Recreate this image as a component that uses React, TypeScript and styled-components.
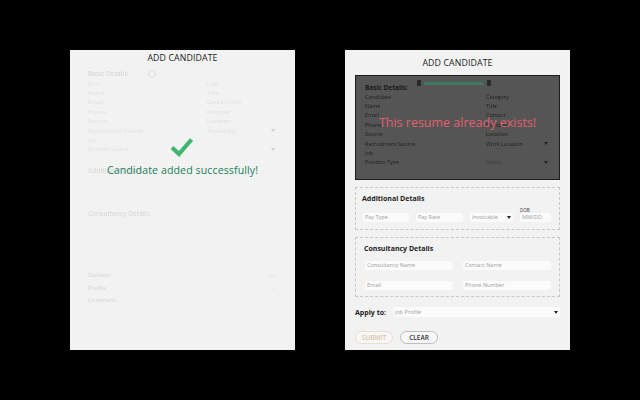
import React from "react";
import styled, { createGlobalStyle } from "styled-components";

const Global = createGlobalStyle`
  html, body { margin: 0; padding: 0; background: #000; }
  body { width: 640px; height: 400px; overflow: hidden; font-family: "Open Sans", "Liberation Sans", sans-serif; }
`;
const Stage = styled.div`
  width: 640px; height: 400px; background: #000; box-sizing: border-box;
  padding: 50px 70px; display: flex; gap: 50px;
`;
const Panel = styled.section`
  position: relative; width: 225px; height: 300px; box-sizing: border-box; background: #f2f2f2; overflow: hidden;
  display: flex; flex-direction: column;
`;
const Title = styled.h1<{ $top: number }>`
  margin: 0; padding-top: ${(p) => p.$top}px; height: 14px; line-height: 14px; box-sizing: content-box;
  font-size: 8.8px; font-weight: 400; text-align: center; color: #1c1c1c; letter-spacing: 0.1px;
`;

/* Left, faded form */
const Faded = styled.div`
  display: flex; flex-direction: column; padding: 3px 20px 0 18px; color: #d4d4d4; filter: blur(0.5px);
  font-size: 6px; line-height: 8px;
`;
const FadedHead = styled.div`
  display: flex; align-items: center; gap: 20px; height: 12px; font-weight: 600; color: #d8d8d8; font-size: 6.5px;
`;
const FadedRing = styled.span`
  width: 6px; height: 6px; border-radius: 50%; border: 1px solid #e0e0e0;
`;
const FadedGrid = styled.div`
  display: grid; grid-template-columns: 119px 1fr; grid-auto-rows: 9.4px; margin-top: -1px;
`;
const FadedCell = styled.div`
  display: flex; justify-content: space-between; align-items: center; color: #e0e0e0; white-space: nowrap;
`;
const FadedSection = styled.div<{ $gap: number }>`
  margin-top: ${(p) => p.$gap}px; height: 12px; font-weight: 600; font-size: 6.5px; color: #dadada;
`;
const FadedLine = styled.div<{ $gap: number }>`
  margin-top: ${(p) => p.$gap}px; display: flex; justify-content: space-between; height: 12.5px; color: #d2d2d2;
`;
const FadedCaret = styled.span`
  margin-left: auto; width: 0; height: 0; border-left: 2px solid transparent; border-right: 2px solid transparent; border-top: 3px solid #cfcfcf;
`;
const Success = styled.div`
  position: absolute; left: 0; right: 0; top: 87px; display: flex; flex-direction: column; align-items: center; gap: 5px;
`;
const SuccessText = styled.div`
  font-size: 10.6px; line-height: 16px; color: #1c7f5c; white-space: nowrap; letter-spacing: 0.1px;
`;
const CheckSlot = styled.div`
  height: 20px; padding-right: 2px;
`;

/* Right form */
const Resume = styled.div`
  margin: 5px 10px 0; height: 105px; box-sizing: border-box; background: #555; border: 1px solid #1e1e1e;
  position: relative; padding: 3px 9px 0 9px; color: #222; font-size: 6px; line-height: 8px; flex: none;
`;
const Progress = styled.div`
  display: flex; align-items: center; gap: 3px; justify-content: center; height: 8px; margin-bottom: -3px; padding-right: 8px;
`;
const ProgressCap = styled.span`
  width: 4px; height: 6px; background: #2b2b2b;
`;
const ProgressBar = styled.span`
  width: 60px; height: 3px; background: #3f7a62; border-radius: 2px;
`;
const BasicHead = styled.div`
  font-size: 6.5px; font-weight: 700; color: #1b1b1b; height: 10px;
`;
const ResumeGrid = styled.div`
  display: grid; grid-template-columns: 121px 1fr; grid-auto-rows: 9.4px; margin-top: -2px; filter: blur(0.3px);
`;
const ResumeCell = styled.div<{ $soft?: boolean }>`
  display: flex; justify-content: space-between; align-items: center; padding-right: 2px;
  color: ${(p) => (p.$soft ? "#3c3c3c" : "#202020")}; white-space: nowrap; font-size: 5.5px;
`;
const Exists = styled.div`
  position: absolute; left: 0; right: 0; top: 38px; text-align: center; font-size: 12.5px; line-height: 18px;
  color: #e2606f; white-space: nowrap;
`;
const Box = styled.fieldset<{ $h: number; $gap: number }>`
  margin: ${(p) => p.$gap}px 10px 0; padding: 0; height: ${(p) => p.$h}px; box-sizing: border-box; flex: none;
  border: 1px dashed #c8c8c8; display: flex; flex-direction: column; min-width: 0;
`;
const BoxTitle = styled.div<{ $left: number }>`
  padding: 6px 0 0 ${(p) => p.$left}px; font-size: 7px; line-height: 10px; font-weight: 700; color: #222;
`;
const PayRow = styled.div`
  display: flex; align-items: flex-end; gap: 7px; padding: 0 7px; margin-top: 3px; height: 15px;
`;
const Input = styled.div<{ $w?: number }>`
  ${(p) => (p.$w ? `width: ${p.$w}px; flex: none;` : "flex: 1;")}
  height: 9px; line-height: 9px; box-sizing: border-box; padding-left: 2px; background: #fbfbfb; border-radius: 2px;
  font-size: 5.5px; color: #9d9d9d; white-space: nowrap; overflow: hidden;
`;
const Dropdown = styled(Input)`
  display: flex; justify-content: space-between; align-items: center; padding-right: 2px;
`;
const Caret = styled.span`
  width: 0; height: 0; border-left: 2.5px solid transparent; border-right: 2.5px solid transparent; border-top: 3px solid #222;
`;
const Dob = styled.div`
  display: flex; flex-direction: column; align-items: flex-start; width: 31px; flex: none;
  font-size: 4.5px; line-height: 6px; color: #333;
`;
const ConsultGrid = styled.div`
  display: grid; grid-template-columns: 88px 88px; gap: 11px 10px; padding: 7px 0 0 9px;
`;
const ApplyRow = styled.div`
  display: flex; align-items: center; gap: 7px; margin: 10px 10px 0; height: 10px;
`;
const ApplyLabel = styled.span`
  font-size: 7px; font-weight: 700; color: #222; white-space: nowrap;
`;
const ApplySelect = styled(Dropdown)`
  height: 10px;
`;
const Buttons = styled.div`
  display: flex; gap: 7px; margin: 14px 10px 0;
`;
const Btn = styled.button<{ $disabled?: boolean }>`
  width: 38px; height: 13px; padding: 0; border-radius: 7px; background: #f7f7f7;
  border: 1px solid ${(p) => (p.$disabled ? "#eadfca" : "#bdbdbd")};
  color: ${(p) => (p.$disabled ? "#d7c6a6" : "#333")};
  font: 600 6.5px/11px "Open Sans", sans-serif;
`;

const Check = () => (
  <svg width="24" height="20" viewBox="0 0 24 20" aria-hidden="true">
    <path d="M2 10.5 L9 17 L21.5 2.5" fill="none" stroke="#3fb56e" strokeWidth="4.2" />
  </svg>
);

const fadedRows = [
  ["First", "Last"], ["Name", "Title"], ["Email", "Contact Info"], ["Phone", "Number"],
  ["Source", "Location"], ["Recruitment Source", "Availability"], ["Job", ""], ["Current Status", ""],
];
const resumeRows = [
  ["Candidate", "Category"], ["Name", "Title"], ["Email", "Contact"], ["Phone", "Number"],
  ["Source", "Location"], ["Recruitment Source", "Work Location"], ["Job", ""], ["Position Type", "Select"],
];

export default function App() {
  return (
    <Stage>
      <Global />
      <Panel>
        <Title $top={1}>ADD CANDIDATE</Title>
        <Faded>
          <FadedHead>Basic Details<FadedRing /></FadedHead>
          <FadedGrid>
            {fadedRows.flat().map((t, i) => (
              <FadedCell key={i}>{t}{(i === 11 || i === 15) && <FadedCaret />}</FadedCell>
            ))}
          </FadedGrid>
          <FadedSection $gap={13}>Additional Details</FadedSection>
          <FadedSection $gap={31}>Consultancy Details</FadedSection>
          <FadedLine $gap={49}>Division<span>—</span></FadedLine>
          <FadedLine $gap={0}>Profile<span>›</span></FadedLine>
          <FadedLine $gap={0}>Comment</FadedLine>
        </Faded>
        <Success>
          <CheckSlot><Check /></CheckSlot>
          <SuccessText>Candidate added successfully!</SuccessText>
        </Success>
      </Panel>
      <Panel>
        <Title $top={6}>ADD CANDIDATE</Title>
        <Resume>
          <Progress><ProgressCap /><ProgressBar /><ProgressCap /></Progress>
          <BasicHead>Basic Details:</BasicHead>
          <ResumeGrid>
            {resumeRows.flat().map((t, i) => (
              <ResumeCell key={i} $soft={i % 2 === 1 && i > 12}>
                {t}{(i === 11 || i === 15) && <Caret />}
              </ResumeCell>
            ))}
          </ResumeGrid>
          <Exists>This resume already exists!</Exists>
        </Resume>
        <Box $h={43} $gap={7}>
          <BoxTitle $left={6}>Additional Details</BoxTitle>
          <PayRow>
            <Input $w={46}>Pay Type</Input>
            <Input $w={47}>Pay Rate</Input>
            <Dropdown $w={43}>Invoicable<Caret /></Dropdown>
            <Dob>DOB<Input $w={31}>MM/DD</Input></Dob>
          </PayRow>
        </Box>
        <Box $h={60} $gap={7}>
          <BoxTitle $left={8}>Consultancy Details</BoxTitle>
          <ConsultGrid>
            <Input>Consultancy Name</Input>
            <Input>Contact Name</Input>
            <Input>Email</Input>
            <Input>Phone Number</Input>
          </ConsultGrid>
        </Box>
        <ApplyRow>
          <ApplyLabel>Apply to:</ApplyLabel>
          <ApplySelect>Job Profile<Caret /></ApplySelect>
        </ApplyRow>
        <Buttons>
          <Btn $disabled>SUBMIT</Btn>
          <Btn>CLEAR</Btn>
        </Buttons>
      </Panel>
    </Stage>
  );
}
